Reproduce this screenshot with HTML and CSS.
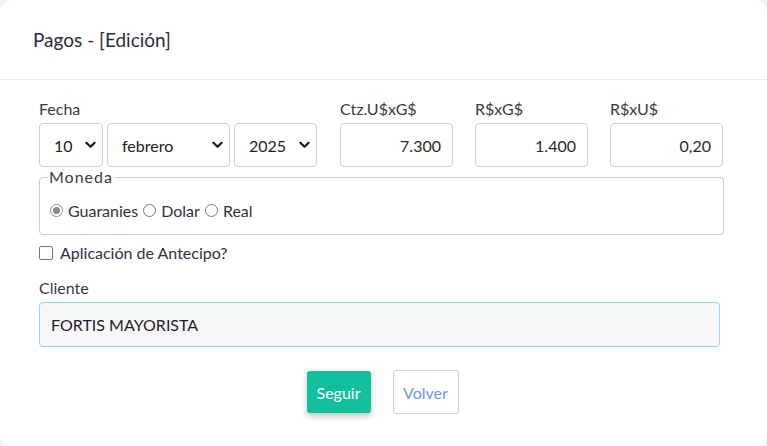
FILE: index.html
```html
<!DOCTYPE html>
<html lang="es">
<head>
<meta charset="utf-8">
<link rel="stylesheet" href="styles.css">
</head>
<body>
<div class="modal">
  <div class="modal-header">
    <h1 class="title">Pagos - [Edición]</h1>
  </div>
  <div class="modal-body">
    <div class="row-top">
      <div class="group fecha">
        <label class="lbl">Fecha</label>
        <div class="selects">
          <div class="sel sel-day"><span>10</span><svg class="chev" viewBox="0 0 12 8"><path d="M1.5 1.5 L6 6 L10.5 1.5" /></svg></div>
          <div class="sel sel-month"><span>febrero</span><svg class="chev" viewBox="0 0 12 8"><path d="M1.5 1.5 L6 6 L10.5 1.5" /></svg></div>
          <div class="sel sel-year"><span>2025</span><svg class="chev" viewBox="0 0 12 8"><path d="M1.5 1.5 L6 6 L10.5 1.5" /></svg></div>
        </div>
      </div>
      <div class="group num">
        <label class="lbl">Ctz.U$xG$</label>
        <div class="inp">7.300</div>
      </div>
      <div class="group num">
        <label class="lbl">R$xG$</label>
        <div class="inp">1.400</div>
      </div>
      <div class="group num">
        <label class="lbl">R$xU$</label>
        <div class="inp">0,20</div>
      </div>
    </div>

    <fieldset class="moneda">
      <legend>Moneda</legend>
      <div class="radios">
        <span class="radio checked"></span><span class="rlabel">Guaranies</span>
        <span class="radio"></span><span class="rlabel">Dolar</span>
        <span class="radio"></span><span class="rlabel">Real</span>
      </div>
    </fieldset>

    <div class="check-row">
      <span class="checkbox"></span><span class="clabel">Aplicación de Antecipo?</span>
    </div>

    <div class="cliente">
      <label class="lbl">Cliente</label>
      <div class="inp-cliente">FORTIS MAYORISTA</div>
    </div>

    <div class="buttons">
      <button class="btn btn-primary">Seguir</button>
      <button class="btn btn-secondary">Volver</button>
    </div>
  </div>
</div>
</body>
</html>
```

FILE: styles.css
```css
* { box-sizing: border-box; }
html, body { margin: 0; padding: 0; }
body {
  background: #f3f3f4;
  font-family: "Lato", "Liberation Sans", sans-serif;
  color: #2f3140;
  width: 767px;
  height: 446px;
  overflow: hidden;
}
.modal {
  background: #fff;
  border-radius: 12px;
  height: 446px;
}
.modal-header {
  height: 80px;
  border-bottom: 1px solid #ececec;
  display: flex;
  align-items: center;
  padding: 0 33px;
}
.title {
  margin: 0;
  font-size: 19px;
  font-weight: 400;
  color: #2a2c3c;
}
.modal-body {
  padding: 19px 43px 0 39px;
}
.row-top {
  display: flex;
  align-items: flex-start;
}
.lbl {
  display: block;
  font-size: 16px;
  line-height: 20px;
  height: 20px;
  margin-bottom: 4px;
  color: #3a3a44;
}
.fecha { width: 278px; margin-right: 23px; }
.selects { display: flex; gap: 4px; }
.sel {
  height: 44px;
  border: 1px solid #cfcfcf;
  border-radius: 4px;
  display: flex;
  align-items: center;
  justify-content: space-between;
  padding: 0 6px 0 14px;
  font-size: 16px;
  color: #222;
}
.sel-day { width: 64px; }
.sel-month { width: 123px; }
.sel-year { width: 83px; }
.chev {
  width: 11px;
  height: 8px;
  fill: none;
  stroke: #111;
  stroke-width: 2.2;
  stroke-linecap: round;
  stroke-linejoin: round;
}
.num { width: 113px; margin-right: 22px; }
.num:last-child { margin-right: 0; }
.inp {
  height: 44px;
  border: 1px solid #cfcfcf;
  border-radius: 4px;
  display: flex;
  align-items: center;
  justify-content: flex-end;
  padding: 0 11px;
  font-size: 16px;
  color: #2a2a30;
}
.moneda {
  margin: 1px 0 0;
  padding: 0 10px 0 10px;
  border: 1px solid #cccccc;
  border-radius: 4px;
  height: 67px;
}
.moneda legend {
  font-size: 16px;
  letter-spacing: 1px;
  padding: 0 1px;
  margin-left: -2px;
  line-height: 18px;
  color: #3a3a44;
}
.radios {
  display: flex;
  align-items: center;
  margin-top: 15px;
  font-size: 16px;
}
.radio {
  width: 13px;
  height: 13px;
  border: 1px solid #777;
  border-radius: 50%;
  margin-right: 5px;
  position: relative;
  background: #fff;
}
.radio.checked {
  border-color: #8a8a8a;
}
.radio.checked::after {
  content: "";
  position: absolute;
  left: 2px; top: 2px;
  width: 7px; height: 7px;
  border-radius: 50%;
  background: #8a8a8a;
}
.rlabel { margin-right: 5px; color: #2f3140; }
.check-row {
  display: flex;
  align-items: center;
  margin-top: 9px;
  height: 17px;
  font-size: 16px;
}
.checkbox {
  width: 14px;
  height: 14px;
  border: 1px solid #777;
  border-radius: 2px;
  margin-right: 7px;
}
.cliente { margin-top: 17px; }
.inp-cliente {
  width: 681px;
  height: 45px;
  background: #f7f7f7;
  border: 1px solid #93d5f2;
  border-radius: 4px;
  display: flex;
  align-items: center;
  padding: 0 11px;
  font-size: 16px;
  color: #1f2030;
}
.buttons {
  display: flex;
  justify-content: center;
  align-items: center;
  gap: 22px;
  margin-top: 23px;
  padding-left: 2px;
}
.btn {
  font-family: "Lato", "Liberation Sans", sans-serif;
  font-size: 16px;
  border-radius: 3px;
  cursor: pointer;
}
.btn-primary {
  width: 64px;
  height: 42px;
  background: #13c09d;
  color: #fff;
  border: none;
  box-shadow: 0 3px 6px rgba(0,0,0,0.25);
}
.btn-secondary {
  width: 66px;
  height: 44px;
  background: #fff;
  color: #6f94f0;
  border: 1px solid #cfcfcf;
}
```
